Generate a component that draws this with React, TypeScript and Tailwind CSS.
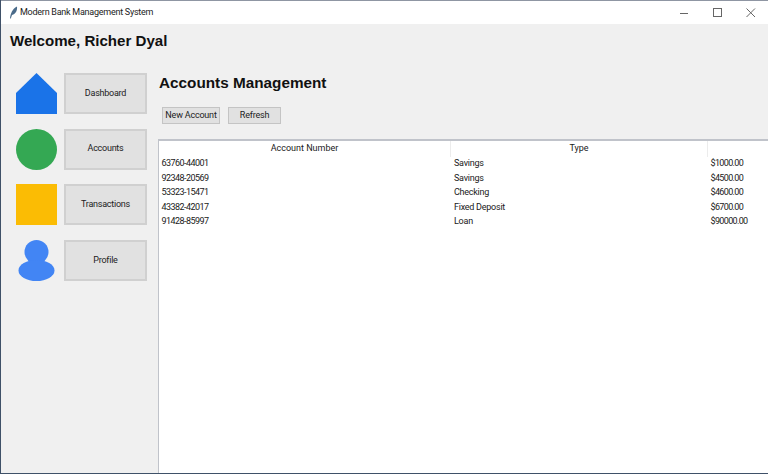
const sans = "font-['Roboto','Noto_Sans',sans-serif]";

function Home() {
  return (
    <svg width="41" height="41" viewBox="0 0 41 41" className="block">
      <polygon points="20.5,0 41,20 41,41 0,41 0,20" fill="#1a73e8" />
    </svg>
  );
}
function Circle() {
  return (
    <svg width="41" height="41" viewBox="0 0 41 41" className="block">
      <circle cx="20.5" cy="20.5" r="20.5" fill="#34a853" />
    </svg>
  );
}
function Square() {
  return <div className="w-[41px] h-[41px] bg-[#fbbc04]" />;
}
function Person() {
  return (
    <svg width="41" height="41" viewBox="0 0 41 41" className="block">
      <circle cx="20.5" cy="12" r="12" fill="#4285f4" />
      <ellipse cx="20.5" cy="30.5" rx="18" ry="10.5" fill="#4285f4" />
    </svg>
  );
}

const nav = [
  { label: "Dashboard", icon: <Home /> },
  { label: "Accounts", icon: <Circle /> },
  { label: "Transactions", icon: <Square /> },
  { label: "Profile", icon: <Person /> },
];

const rows = [
  ["63760-44001", "Savings", "$1000.00"],
  ["92348-20569", "Savings", "$4500.00"],
  ["53323-15471", "Checking", "$4600.00"],
  ["43382-42017", "Fixed Deposit", "$6700.00"],
  ["91428-85997", "Loan", "$90000.00"],
];

export default function App() {
  return (
    <div className={`w-[768px] h-[474px] overflow-hidden flex flex-col bg-[#f0f0f0] text-[#1a1a1a] border-l border-[#3f5168] ${sans}`}>
      <div className="h-[24px] shrink-0 bg-white border-t border-[#8f96a3] flex items-center pl-[8px]">
        <svg width="9" height="13" viewBox="0 0 9 13" className="shrink-0">
          <path d="M1 12.5 C1.5 8 3 3 8 0.5 C8.5 4 7 8 3 9 L1.8 12.5 Z" fill="#4a6b8a" />
        </svg>
        <span className="ml-[2px] text-[9px] tracking-[-0.25px] leading-none text-[#222]">Modern Bank Management System</span>
        <div className="ml-auto flex items-center">
          <svg width="12" height="12" viewBox="0 0 12 12" className="mr-[21px]">
            <path d="M1 6.5 H9" stroke="#666" strokeWidth="1" />
          </svg>
          <svg width="12" height="12" viewBox="0 0 12 12" className="mr-[21px]">
            <rect x="1.5" y="1.5" width="8" height="8" fill="none" stroke="#666" strokeWidth="1" />
          </svg>
          <svg width="12" height="12" viewBox="0 0 12 12" className="mr-[11px]">
            <path d="M1.5 1.5 L10 10 M10 1.5 L1.5 10" stroke="#666" strokeWidth="1" fill="none" />
          </svg>
        </div>
      </div>

      <div className="h-[34px] shrink-0 pl-[9px] pt-[8px]">
        <h1 className="font-['Liberation_Sans',sans-serif] font-bold text-[15.1px] leading-[18px] text-[#111]">Welcome, Richer Dyal</h1>
      </div>

      <div className="flex-1 flex min-h-0">
        <nav className="w-[157px] shrink-0 flex flex-col gap-[14.6px] pt-[15px] pl-[15px]">
          {nav.map((n) => (
            <div key={n.label} className="flex items-center gap-[7px] h-[41px]">
              <div className="w-[41px] h-[41px] shrink-0">{n.icon}</div>
              <button className="w-[83px] h-[41px] bg-[#e1e1e1] border-2 border-[#d0d0d0] text-[9px] tracking-[-0.25px] text-[#222] flex items-center justify-center">
                {n.label}
              </button>
            </div>
          ))}
        </nav>

        <main className="flex-1 min-w-0 flex flex-col">
          <h2 className="font-['Liberation_Sans',sans-serif] font-bold text-[15.3px] leading-[18px] text-[#111] mt-[16px] ml-[1px]">Accounts Management</h2>
          <div className="flex gap-[8px] ml-[4px] mt-[15px]">
            <button className="w-[58px] h-[17px] bg-[#e1e1e1] border border-[#c4c4c4] text-[9px] tracking-[-0.2px] leading-none text-[#222]">New Account</button>
            <button className="w-[53px] h-[17px] bg-[#e1e1e1] border border-[#c4c4c4] text-[9px] tracking-[-0.2px] leading-none text-[#222]">Refresh</button>
          </div>
          <div className="mt-[15px] flex-1 bg-white border-l border-t-2 border-[#c0c3ca] min-h-0 text-[9px]">
            <div className="grid grid-cols-[292px_257px_1fr] h-[15.8px]">
              <div className="border-r border-[#ececec] flex items-center justify-center leading-none">Account Number</div>
              <div className="border-r border-[#ececec] flex items-center justify-center leading-none">Type</div>
              <div />
            </div>
            <div className="flex flex-col">
              {rows.map((r) => (
                <div key={r[0]} className="grid grid-cols-[292px_257px_1fr] h-[14.4px] items-center leading-none">
                  <div className="pl-[2.5px] tracking-[-0.55px]">{r[0]}</div>
                  <div className="pl-[3px] tracking-[-0.25px]">{r[1]}</div>
                  <div className="pl-[2.5px] tracking-[-0.65px]">{r[2]}</div>
                </div>
              ))}
            </div>
          </div>
        </main>
      </div>
      <div className="h-[1px] shrink-0 bg-[#3f5168]" />
    </div>
  );
}
